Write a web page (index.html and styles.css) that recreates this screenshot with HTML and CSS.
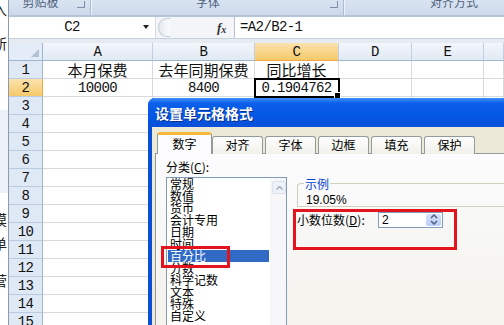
FILE: index.html
```html
<!DOCTYPE html>
<html lang="zh-CN">
<head>
    <meta charset="UTF-8">
    <title>设置单元格格式</title>
    <link rel="stylesheet" href="styles.css">
</head>
<body>
    <div class="screen">
        <div class="edge">
            <span class="frag f1">入</span>
            <span class="frag f2">所</span>
            <span class="shade"></span>
            <span class="frag f3">摸</span>
            <span class="frag f4">单</span>
            <span class="frag f5">营</span>
        </div>
        <div class="excel">
            <div class="ribbon">
                <div class="rgroup g-clip"><span>剪贴板</span><i class="launch"></i></div>
                <div class="rgroup g-font"><span>字体</span><i class="launch"></i></div>
                <div class="rgroup g-align"><span>对齐方式</span></div>
            </div>
            <div class="fbar">
                <div class="namebox">C2<i class="dd"></i></div>
                <div class="fb-mid">
                    <i class="grip"></i>
                    <span class="fx">f<sub>x</sub></span>
                </div>
                <div class="formula">=A2/B2-1</div>
            </div>
            <div class="sheet" id="sheet">
                <div class="corner"></div>
                <div class="ch">A</div>
                <div class="ch">B</div>
                <div class="ch ch-sel">C</div>
                <div class="ch">D</div>
                <div class="ch">E</div>
                <div class="ch"></div>

                <div class="rh">1</div>
                <div class="cell cjk">本月保费</div>
                <div class="cell cjk">去年同期保费</div>
                <div class="cell cjk">同比增长</div>
                <div class="cell"></div>
                <div class="cell"></div>
                <div class="cell"></div>

                <div class="rh rh-sel">2</div>
                <div class="cell">10000</div>
                <div class="cell">8400</div>
                <div class="cell sel">0.1904762</div>
                <div class="cell"></div>
                <div class="cell"></div>
                <div class="cell"></div>
            </div>
        </div>
    </div>

    <div class="dialog">
        <div class="dlg-title">设置单元格格式</div>
        <div class="dlg-body">
            <div class="tabs">
                <div class="tab active">数字</div>
                <div class="tab">对齐</div>
                <div class="tab">字体</div>
                <div class="tab">边框</div>
                <div class="tab">填充</div>
                <div class="tab">保护</div>
            </div>
            <div class="panel">
                <div class="col-left">
                    <div class="lbl">分类(<u>C</u>):</div>
                    <div class="listbox">
                        <ul class="cats">
                            <li>常规</li>
                            <li>数值</li>
                            <li>货币</li>
                            <li>会计专用</li>
                            <li>日期</li>
                            <li>时间</li>
                            <li class="picked">百分比</li>
                            <li>分数</li>
                            <li>科学记数</li>
                            <li>文本</li>
                            <li>特殊</li>
                            <li>自定义</li>
                        </ul>
                        <div class="vscroll">
                            <span class="up">
                                <svg width="7" height="4" viewBox="0 0 7 4"><path d="M0.5 3.5 L3.5 0.5 L6.5 3.5" fill="none" stroke="#9aa8bf" stroke-width="1.4"/></svg>
                            </span>
                        </div>
                    </div>
                </div>
                <div class="col-right">
                    <fieldset class="sample">
                        <legend>示例</legend>
                        <div class="sample-val">19.05%</div>
                    </fieldset>
                    <div class="decimals">
                        <span class="dec-lbl">小数位数(<u>D</u>):</span>
                        <div class="spin">
                            <span>2</span>
                            <span class="spin-btn">
                                <svg width="8" height="11" viewBox="0 0 8 11"><path d="M1 4 L4 1 L7 4" fill="none" stroke="#4d6185" stroke-width="1.5"/><path d="M1 7 L4 10 L7 7" fill="none" stroke="#4d6185" stroke-width="1.5"/></svg>
                            </span>
                        </div>
                    </div>
                </div>
            </div>
        </div>
        <div class="mark mark-pct"></div>
        <div class="mark mark-dec"></div>
    </div>

    <script>
        // empty rows 3..15
        var sheet = document.getElementById('sheet');
        for (var r = 3; r <= 15; r++) {
            var row = '<div class="rh">' + r + '</div>';
            for (var c = 0; c < 6; c++) {
                row += '<div class="cell"></div>';
            }
            sheet.insertAdjacentHTML('beforeend', row);
        }
    </script>
</body>
</html>
```

FILE: styles.css
```css
body {
    margin: 0;
    width: 504px;
    height: 325px;
    overflow: hidden;
    position: relative;
    background: #fff;
    font-family: "Noto Sans CJK SC", sans-serif;
}
.screen {
    display: flex;
    height: 325px;
}

/* window behind, cut at the left edge */
.edge {
    width: 8px;
    flex: none;
    border-right: 1px solid #8d9bad;
    background: #fff;
    overflow: hidden;
    display: flex;
    flex-direction: column;
}
.frag {
    display: block;
    margin-left: -7px;
    font-size: 14px;
    line-height: 14px;
    color: #222;
}
.f1 { margin-top: 2px; }
.f2 { margin-top: 20px; }
.shade {
    display: block;
    margin-top: 60px;
    height: 83px;
    background: #edf2f9;
}
.f3 { margin-top: 19px; }
.f4 { margin-top: 10px; }
.f5 { margin-top: 23px; }

.excel {
    flex: 1;
    display: flex;
    flex-direction: column;
    background: #e6ebf2;
}

/* ribbon label strip */
.ribbon {
    height: 15px;
    flex: none;
    display: flex;
    overflow: hidden;
    background: linear-gradient(#d9e4f2, #ccd9ea);
    border-bottom: 2px solid #b4c5da;
}
.rgroup {
    position: relative;
    border-right: 1px solid #aabdd4;
    box-shadow: 1px 0 0 #eef3fa;
    color: #4f627c;
    font-size: 12px;
    line-height: 12px;
    text-align: center;
}
.rgroup span {
    display: block;
    margin-top: -4px;
}
.g-clip { width: 63px; padding-right: 18px; }
.g-font { width: 234px; padding-right: 18px; }
.g-align { flex: 1; padding-left: 30px; border-right: none; text-align: left; }
.g-align span { padding-left: 56px; }
.launch {
    position: absolute;
    right: 5px;
    top: 1px;
    width: 7px;
    height: 6px;
    border-right: 1px solid #7d8ea6;
    border-bottom: 1px solid #7d8ea6;
}

/* formula bar */
.fbar {
    height: 21px;
    flex: none;
    display: flex;
    margin-bottom: 4px;
    background: #fff;
    border-bottom: 1px solid #c6d1de;
    font: 14px/21px "Liberation Mono", monospace;
    letter-spacing: -0.6px;
}
.namebox {
    width: 147px;
    position: relative;
    text-align: center;
    padding-right: 20px;
    box-sizing: border-box;
    border-right: 1px solid #d5dce6;
    color: #111;
}
.dd {
    position: absolute;
    right: 6px;
    top: 8px;
    border-left: 3.5px solid transparent;
    border-right: 3.5px solid transparent;
    border-top: 4px solid #222;
}
.fb-mid {
    width: 78px;
    display: flex;
    align-items: center;
    background: #f3f5f8;
}
.grip {
    width: 11px;
    height: 17px;
    margin-left: 2px;
    border-radius: 9px 0 0 9px;
    border: 1px solid #c4ccd6;
    border-right: none;
    background: linear-gradient(90deg, #e3e8ee, #fafbfc);
}
.fx {
    margin-left: 47px;
    font: italic bold 13px "Liberation Serif", serif;
    letter-spacing: 0;
    color: #333;
}
.fx sub {
    font-size: 10px;
    vertical-align: -1px;
}
.formula {
    flex: 1;
    padding-left: 5px;
    border-left: 1px solid #b7c3d3;
    color: #111;
}

/* worksheet */
.sheet {
    flex: 1;
    display: grid;
    grid-template-columns: 34px 110px 102px 84px 73px 72px 1fr;
    grid-auto-rows: 18px;
    background: #fff;
    font: 14px/18px "Liberation Mono", monospace;
    letter-spacing: -0.6px;
    color: #111;
}
.sheet > div {
    box-sizing: border-box;
    text-align: center;
    white-space: nowrap;
}
.corner {
    position: relative;
    background: #e4ecf7;
    border-right: 1px solid #9eb6ce;
    border-bottom: 1px solid #9eb6ce;
}
.corner::after {
    content: "";
    position: absolute;
    right: 3px;
    bottom: 3px;
    border-left: 8px solid transparent;
    border-bottom: 8px solid #b4c1d0;
}
.ch {
    background: linear-gradient(#f3f6fb, #e1e9f4);
    border-right: 1px solid #c0cfe0;
    border-bottom: 1px solid #9eb6ce;
}
.ch-sel {
    background: linear-gradient(#fbe2ae, #f5c96a);
    border-bottom: 1px solid #f0a940;
}
.rh {
    background: #dfe8f5;
    border-right: 1px solid #9eb6ce;
    border-bottom: 1px solid #b8cbe0;
}
.rh-sel {
    background: linear-gradient(#fbe2ae, #f5c96a);
    border-right: 1px solid #f0a940;
}
.cell {
    border-right: 1px solid #d6d9dd;
    border-bottom: 1px solid #d6d9dd;
}
.cjk {
    font: 15px/18px "Noto Sans CJK SC", sans-serif;
    letter-spacing: 0;
}
.sel {
    position: relative;
    outline: 2px solid #000;
    outline-offset: -1px;
}
.sel::after {
    content: "";
    position: absolute;
    right: -3px;
    bottom: -3px;
    width: 5px;
    height: 5px;
    background: #000;
    border: 1px solid #fff;
}

/* format cells dialog */
.dialog {
    position: absolute;
    left: 148px;
    top: 98px;
    width: 372px;
    height: 240px;
    display: flex;
    flex-direction: column;
    background: #0a4fd6;
    border-radius: 7px 7px 0 0;
    overflow: hidden;
    font: 12px "Noto Sans CJK SC", sans-serif;
    color: #000;
}
.dlg-title {
    height: 29px;
    flex: none;
    padding-left: 7px;
    background: linear-gradient(#3f8ff7, #0b5fe9 18%, #0358e6 60%, #0a4fd8);
    color: #fff;
    font-weight: bold;
    font-size: 14px;
    line-height: 31px;
    text-shadow: 1px 1px #0b2f8a;
}
.dlg-body {
    flex: 1;
    margin-left: 4px;
    background: #ece9d8;
}
.tabs {
    display: flex;
    align-items: flex-end;
    height: 27px;
    padding-left: 5px;
    margin-bottom: -1px;
    position: relative;
}
.tab {
    width: 51px;
    height: 18px;
    margin-left: 2px;
    box-sizing: border-box;
    border: 1px solid #919b9c;
    border-bottom: none;
    border-radius: 3px 3px 0 0;
    background: linear-gradient(#fefefe, #f1f0ea);
    text-align: center;
    line-height: 16px;
}
.tab.active {
    width: 55px;
    height: 22px;
    margin-left: 0;
    margin-right: -1px;
    border-top: 3px solid #f5b83f;
    background: #fcfcfe;
    line-height: 18px;
    position: relative;
    z-index: 1;
}
.tab.active + .tab { margin-left: 1px; }
.panel {
    margin-left: 3px;
    height: 200px;
    display: flex;
    padding: 6px 0 0 10px;
    border: 1px solid #919b9c;
    background: linear-gradient(#fcfcfe, #f4f3ee 70%);
}
.col-left { width: 121px; flex: none; }
.lbl {
    line-height: 13px;
    margin-bottom: 4px;
}
.listbox {
    height: 170px;
    display: flex;
    border: 1px solid #7f9db9;
    background: #fff;
}
.cats {
    flex: 1;
    list-style: none;
    margin: 0;
    padding: 0 1px 0 1px;
}
.cats li {
    height: 12px;
    line-height: 12px;
    padding-left: 2px;
}
.cats li.picked {
    background: #316ac5;
    color: #fff;
}
.vscroll {
    width: 16px;
    background: #f7f7f9;
}
.up {
    display: flex;
    align-items: center;
    justify-content: center;
    width: 12px;
    height: 11px;
    margin: 3px 0 0 2px;
    border: 1px solid #dbe1ea;
    border-radius: 2px;
    background: #eef1f6;
}
.col-right {
    flex: 1;
    margin-left: 10px;
    padding-top: 17px;
}
.sample {
    margin: 0;
    padding: 0 0 4px 6px;
    height: 30px;
    box-sizing: border-box;
    border: 1px solid #d0d0bf;
    border-right: none;
    border-radius: 4px 0 0 0;
}
.sample legend {
    padding: 0 1px;
    color: #0046d5;
    line-height: 13px;
}
.sample-val {
    font: 12px/12px "Liberation Sans", sans-serif;
    padding-left: 2px;
    margin-top: 4px;
}
.decimals {
    display: flex;
    align-items: center;
    margin-top: 4px;
}
.dec-lbl { width: 81px; }
.spin {
    width: 65px;
    height: 16px;
    box-sizing: border-box;
    display: flex;
    align-items: center;
    justify-content: space-between;
    padding-left: 3px;
    border: 1px solid #7f9db9;
    background: #fff;
    font: 12px "Liberation Sans", sans-serif;
}
.spin-btn {
    width: 15px;
    height: 12px;
    margin-right: 1px;
    display: flex;
    align-items: center;
    justify-content: center;
    background: linear-gradient(#d6e2fb, #b9cdf6);
    border-radius: 2px;
}

/* red annotation frames */
.mark {
    position: absolute;
    border: 3px solid #e3141d;
}
.mark-pct {
    left: 13px;
    top: 148px;
    width: 63px;
    height: 16px;
}
.mark-dec {
    left: 145px;
    top: 111px;
    width: 158px;
    height: 35px;
}
```
